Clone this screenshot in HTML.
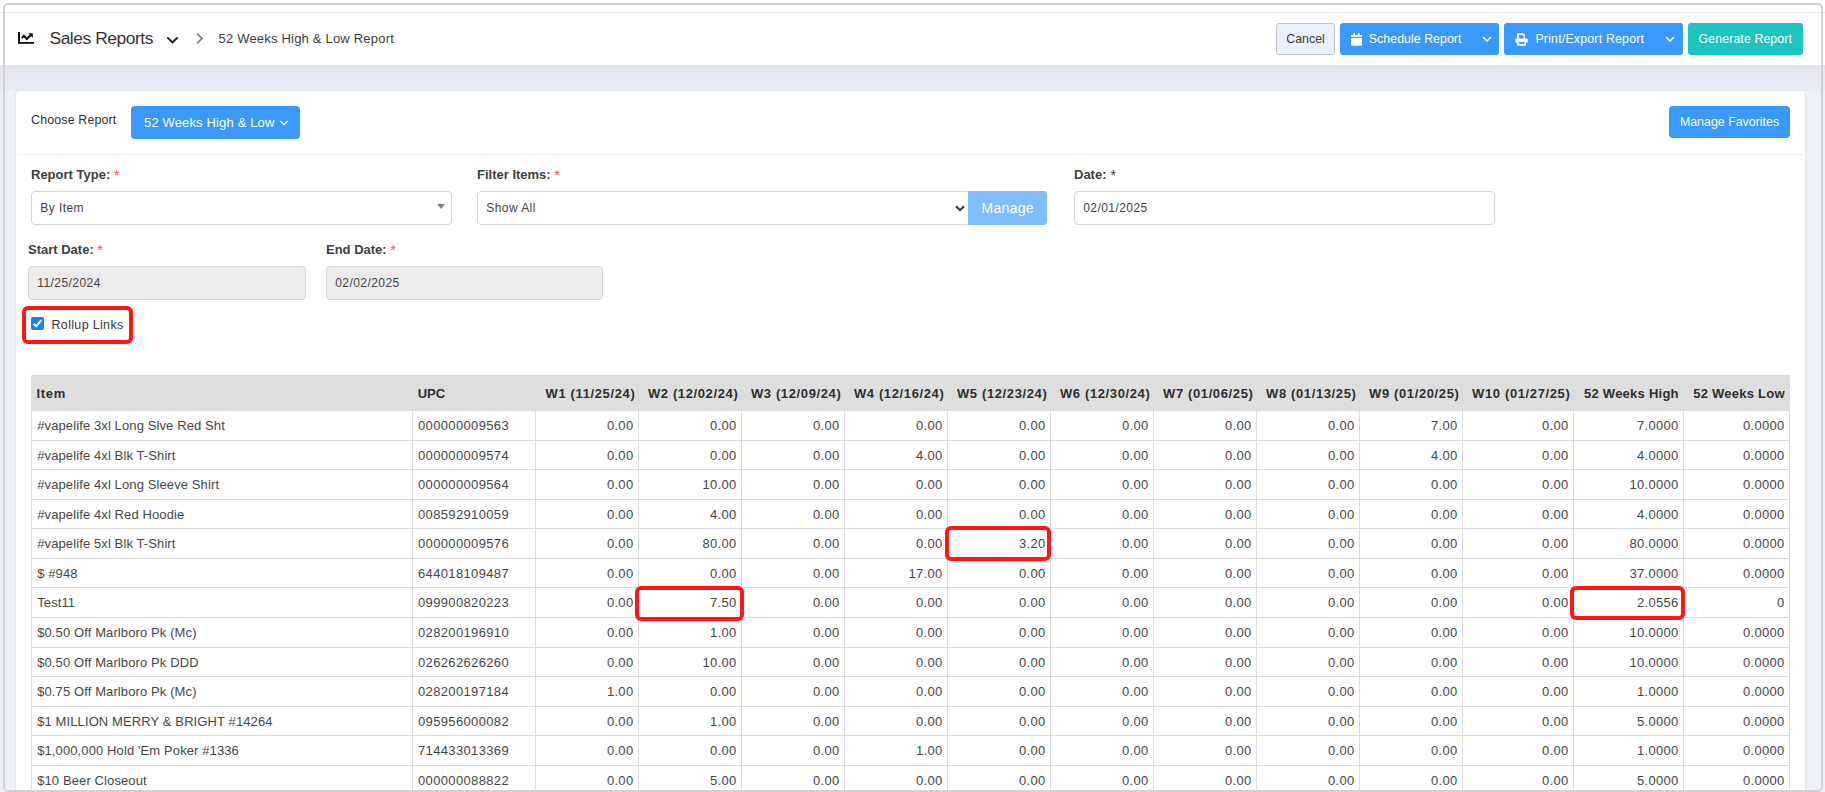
<!DOCTYPE html>
<html><head><meta charset="utf-8">
<style>
*{box-sizing:border-box;margin:0;padding:0}
html,body{width:1825px;height:792px;overflow:hidden;background:#eef0f8;font-family:"Liberation Sans",sans-serif;color:#333}
.abs{position:absolute}
#hdr{position:absolute;left:0;top:0;width:1825px;height:65px;background:#fff;border-top:1px solid #fff}
#hdrline{position:absolute;left:0;top:12px;width:1825px;height:1px;background:#e9edf1}
#frame{position:absolute;left:3px;top:3px;width:1820px;height:789px;border:2px solid #d4d1d3;border-radius:5px;pointer-events:none;z-index:50}
.btn{position:absolute;border-radius:3px;color:#fff;font-size:12.4px;line-height:31px;white-space:nowrap}
.card{position:absolute;left:15px;top:90px;width:1791px;height:720px;background:#fff;border:1px solid #e3e5ed;border-radius:4px}
.lbl{position:absolute;font-size:13px;font-weight:700;color:#404040;margin-top:1px;line-height:15px}
.req{color:#f64e60;font-size:15px;font-weight:400;line-height:0;position:relative;top:1px}
.inp{position:absolute;height:33.6px;border:1px solid #d6d6d6;border-radius:4px;background:#fff;font-size:12px;letter-spacing:.45px;color:#444;line-height:33px;padding-left:8.2px}
.dis{background:#ececec}
table{position:absolute;left:31px;top:375px;border-collapse:collapse;table-layout:fixed;font-size:13px;color:#333}
th{background:#dedede;height:35.5px;font-weight:700;text-align:right;padding:0 5px;white-space:nowrap}
td{height:29.5px;border:1px solid #dcdcdc;text-align:right;padding:0 5px;white-space:nowrap}
th.l,td.l{text-align:left}
.th{position:absolute;font-size:13px;font-weight:700;color:#2e2e2e;letter-spacing:.45px;white-space:nowrap}
.td{position:absolute;font-size:13px;color:#474747;height:29.5px;line-height:29.5px;white-space:nowrap}
.rb{position:absolute;border:4px solid #ff1616;border-radius:6px;z-index:10}
</style></head><body>
<div id="hdr"></div>
<div id="hdrline"></div>
<div class="abs" style="left:0;top:65px;width:1825px;height:26px;background:linear-gradient(#e3e4ee,#e9ebf4)"></div>

<!-- breadcrumb -->
<svg class="abs" style="left:14px;top:28px" width="24" height="20" viewBox="0 0 24 20">
 <rect x="4" y="4" width="2" height="11.8" fill="#111"/>
 <rect x="4" y="14" width="16" height="1.8" fill="#111"/>
 <path d="M7.9 10.1L9.9 7.8L12.9 10.9L16.6 7.3" fill="none" stroke="#111" stroke-width="2.1" stroke-linejoin="miter"/>
 <path d="M14.1 5.2H18.8V9.8z" fill="#111"/>
</svg>
<div class="abs" style="left:49.5px;top:28.2px;font-size:17.4px;letter-spacing:-.45px;line-height:20px;color:#333">Sales Reports</div>
<svg class="abs" style="left:160px;top:28px" width="50" height="20" viewBox="0 0 50 20">
 <path d="M7.3 9.4L12.5 14.4L17.7 9.4" fill="none" stroke="#1a1a1a" stroke-width="1.8"/>
 <path d="M37.1 5.7L41.9 10.5L37.1 15.3" fill="none" stroke="#797b8d" stroke-width="1.7"/>
</svg>
<div class="abs" style="left:218.5px;top:31px;font-size:13px;letter-spacing:.2px;color:#3d3d3d">52 Weeks High &amp; Low Report</div>

<!-- header buttons -->
<div class="btn" style="left:1276px;top:23px;width:59px;height:31.5px;background:#e9f2fc;border:1px solid #c1c4c9;color:#3f3f3f;text-align:center;line-height:31.5px">Cancel</div>
<div class="btn" style="left:1340px;top:23px;width:159px;height:32px;background:#3a99fc"></div>
<svg class="abs" style="left:1351px;top:33px" width="11" height="13" viewBox="0 0 11 13"><rect x="2.3" y="0" width="1.7" height="2.6" fill="#fff"/><rect x="6.9" y="0" width="1.8" height="2.6" fill="#fff"/><rect x="0" y="2" width="11" height="1.9" rx=".6" fill="#fff"/><path d="M0 5.1h11v6.4a1.2 1.2 0 0 1-1.2 1.2h-8.6a1.2 1.2 0 0 1-1.2-1.2z" fill="#fff"/></svg>
<div class="abs" style="left:1368.8px;top:32.3px;font-size:12.35px;letter-spacing:.05px;color:#fff;line-height:15px">Schedule Report</div>
<svg class="abs" style="left:1482px;top:36px" width="10" height="6" viewBox="0 0 10 6"><path d="M1 1L5 5L9 1" fill="none" stroke="#fff" stroke-width="1.6"/></svg>
<div class="btn" style="left:1504px;top:23px;width:179px;height:32px;background:#3a99fc"></div>
<svg class="abs" style="left:1515px;top:33px" width="13" height="13" viewBox="0 0 13 13"><path d="M2 0.2H8.3L10 1.9V6H2z" fill="#fff"/><path d="M3.8 2H7.4L8.7 3.2V5.9H3.8z" fill="#3a99fc"/><rect x="0.4" y="5.6" width="12.5" height="4.2" rx="1.2" fill="#fff"/><rect x="2" y="8.4" width="9" height="4.4" rx=".8" fill="#fff"/><rect x="3.8" y="9" width="5.7" height="1.9" fill="#3a99fc"/></svg>
<div class="abs" style="left:1535.4px;top:32.3px;font-size:12.35px;letter-spacing:.2px;color:#fff;line-height:15px">Print/Export Report</div>
<svg class="abs" style="left:1665px;top:36px" width="10" height="6" viewBox="0 0 10 6"><path d="M1 1L5 5L9 1" fill="none" stroke="#fff" stroke-width="1.6"/></svg>
<div class="btn" style="left:1688px;top:23px;width:115px;height:32px;background:#1cc5bd"></div>
<div class="abs" style="left:1698.6px;top:32.3px;font-size:12.35px;letter-spacing:.1px;color:#fff;line-height:15px">Generate Report</div>

<!-- card -->
<div class="card"></div>
<div class="abs" style="left:31px;top:113px;font-size:12.5px;letter-spacing:.1px;color:#333">Choose Report</div>
<div class="btn" style="left:131px;top:106px;width:169px;height:33px;background:#3a99fc;border-radius:4px;font-size:13px;letter-spacing:.15px;line-height:33px;padding-left:13px">52 Weeks High &amp; Low</div>
<svg class="abs" style="left:278.5px;top:120px" width="10" height="6" viewBox="0 0 10 6"><path d="M1.2 1L5 4.6L8.8 1" fill="none" stroke="#fff" stroke-width="1.4"/></svg>
<div class="btn" style="left:1669px;top:106px;width:121px;height:32px;background:#3a99fc;border-radius:4px;line-height:32px;text-align:center">Manage Favorites</div>
<div class="abs" style="left:18px;top:154px;width:1785px;height:1px;background:#ebedf3"></div>

<!-- form -->
<div class="lbl" style="left:31px;top:166px">Report Type: <span class="req">*</span></div>
<div class="inp" style="left:31px;top:191px;width:421px">By Item</div>
<svg class="abs" style="left:437px;top:204px" width="8" height="5" viewBox="0 0 8 5"><path d="M0 0H8L4 5z" fill="#808080"/></svg>
<div class="lbl" style="left:477px;top:166px">Filter Items: <span class="req">*</span></div>
<div class="inp" style="left:477px;top:191px;width:492px;border-radius:4px 0 0 4px">Show All</div>
<div class="btn" style="left:968px;top:191px;width:79px;height:33.6px;background:#80bdfc;border-radius:0 4px 4px 0;font-size:14px;letter-spacing:.3px;line-height:35px;text-align:center;text-indent:.5px">Manage</div>
<svg class="abs" style="left:955px;top:205px" width="10" height="7" viewBox="0 0 10 7"><path d="M1 1.2L5 5.2L9 1.2" fill="none" stroke="#333" stroke-width="2"/></svg>
<div class="lbl" style="left:1074px;top:166px">Date: <span class="req" style="color:#404040">*</span></div>
<div class="inp" style="left:1074px;top:191px;width:421px">02/01/2025</div>

<div class="lbl" style="left:28px;top:241px">Start Date: <span class="req">*</span></div>
<div class="inp dis" style="left:28px;top:266px;width:278px">11/25/2024</div>
<div class="lbl" style="left:326px;top:241px">End Date: <span class="req">*</span></div>
<div class="inp dis" style="left:326px;top:266px;width:277px">02/02/2025</div>

<div class="rb" style="left:21.5px;top:305.5px;width:111px;height:38px"></div>
<svg class="abs" style="left:31px;top:317px" width="13" height="13" viewBox="0 0 13 13"><rect x="0" y="0" width="13" height="13" rx="2" fill="#1a7dff"/><path d="M2.5 6.8L5.2 9.3L10.3 3.2" fill="none" stroke="#fff" stroke-width="2"/></svg>
<div class="abs" style="left:51.5px;top:318px;font-size:12.5px;letter-spacing:.33px;color:#383838;line-height:14px">Rollup Links</div>

<!-- table placeholder -->
<!-- TABLE START -->
<div class="abs" style="left:31px;top:375.0px;width:1758.5px;height:35.5px;background:#dedede"></div>
<div class="th" style="left:36.50px;letter-spacing:.7px;top:376.0px;height:35.5px;line-height:35.5px">Item</div>
<div class="th" style="left:417.70px;letter-spacing:0;top:376.0px;height:35.5px;line-height:35.5px">UPC</div>
<div class="th" style="right:1189.68px;letter-spacing:.62px;top:376.0px;height:35.5px;line-height:35.5px">W1 (11/25/24)</div>
<div class="th" style="right:1086.66px;letter-spacing:.62px;top:376.0px;height:35.5px;line-height:35.5px">W2 (12/02/24)</div>
<div class="th" style="right:983.64px;letter-spacing:.62px;top:376.0px;height:35.5px;line-height:35.5px">W3 (12/09/24)</div>
<div class="th" style="right:880.62px;letter-spacing:.62px;top:376.0px;height:35.5px;line-height:35.5px">W4 (12/16/24)</div>
<div class="th" style="right:777.60px;letter-spacing:.62px;top:376.0px;height:35.5px;line-height:35.5px">W5 (12/23/24)</div>
<div class="th" style="right:674.58px;letter-spacing:.62px;top:376.0px;height:35.5px;line-height:35.5px">W6 (12/30/24)</div>
<div class="th" style="right:571.56px;letter-spacing:.62px;top:376.0px;height:35.5px;line-height:35.5px">W7 (01/06/25)</div>
<div class="th" style="right:468.54px;letter-spacing:.62px;top:376.0px;height:35.5px;line-height:35.5px">W8 (01/13/25)</div>
<div class="th" style="right:365.52px;letter-spacing:.62px;top:376.0px;height:35.5px;line-height:35.5px">W9 (01/20/25)</div>
<div class="th" style="right:254.60px;letter-spacing:.62px;top:376.0px;height:35.5px;line-height:35.5px">W10 (01/27/25)</div>
<div class="th" style="right:146.20px;letter-spacing:.25px;top:376.0px;height:35.5px;line-height:35.5px">52 Weeks High</div>
<div class="th" style="right:40.20px;letter-spacing:.25px;top:376.0px;height:35.5px;line-height:35.5px">52 Weeks Low</div>
<div class="abs" style="left:412.40px;top:375.0px;width:1px;height:35.5px;background:#dadada"></div>
<div class="abs" style="left:535.30px;top:375.0px;width:1px;height:35.5px;background:#dadada"></div>
<div class="abs" style="left:638.32px;top:375.0px;width:1px;height:35.5px;background:#dadada"></div>
<div class="abs" style="left:741.34px;top:375.0px;width:1px;height:35.5px;background:#dadada"></div>
<div class="abs" style="left:844.36px;top:375.0px;width:1px;height:35.5px;background:#dadada"></div>
<div class="abs" style="left:947.38px;top:375.0px;width:1px;height:35.5px;background:#dadada"></div>
<div class="abs" style="left:1050.40px;top:375.0px;width:1px;height:35.5px;background:#dadada"></div>
<div class="abs" style="left:1153.42px;top:375.0px;width:1px;height:35.5px;background:#dadada"></div>
<div class="abs" style="left:1256.44px;top:375.0px;width:1px;height:35.5px;background:#dadada"></div>
<div class="abs" style="left:1359.46px;top:375.0px;width:1px;height:35.5px;background:#dadada"></div>
<div class="abs" style="left:1462.48px;top:375.0px;width:1px;height:35.5px;background:#dadada"></div>
<div class="abs" style="left:1573.40px;top:375.0px;width:1px;height:35.5px;background:#dadada"></div>
<div class="abs" style="left:1683.40px;top:375.0px;width:1px;height:35.5px;background:#dadada"></div>
<div class="abs" style="left:31.00px;top:410.5px;width:1px;height:386.53999999999996px;background:#dcdcdc"></div>
<div class="abs" style="left:411.90px;top:410.5px;width:1px;height:386.53999999999996px;background:#dcdcdc"></div>
<div class="abs" style="left:534.80px;top:410.5px;width:1px;height:386.53999999999996px;background:#dcdcdc"></div>
<div class="abs" style="left:637.82px;top:410.5px;width:1px;height:386.53999999999996px;background:#dcdcdc"></div>
<div class="abs" style="left:740.84px;top:410.5px;width:1px;height:386.53999999999996px;background:#dcdcdc"></div>
<div class="abs" style="left:843.86px;top:410.5px;width:1px;height:386.53999999999996px;background:#dcdcdc"></div>
<div class="abs" style="left:946.88px;top:410.5px;width:1px;height:386.53999999999996px;background:#dcdcdc"></div>
<div class="abs" style="left:1049.90px;top:410.5px;width:1px;height:386.53999999999996px;background:#dcdcdc"></div>
<div class="abs" style="left:1152.92px;top:410.5px;width:1px;height:386.53999999999996px;background:#dcdcdc"></div>
<div class="abs" style="left:1255.94px;top:410.5px;width:1px;height:386.53999999999996px;background:#dcdcdc"></div>
<div class="abs" style="left:1358.96px;top:410.5px;width:1px;height:386.53999999999996px;background:#dcdcdc"></div>
<div class="abs" style="left:1461.98px;top:410.5px;width:1px;height:386.53999999999996px;background:#dcdcdc"></div>
<div class="abs" style="left:1572.90px;top:410.5px;width:1px;height:386.53999999999996px;background:#dcdcdc"></div>
<div class="abs" style="left:1682.90px;top:410.5px;width:1px;height:386.53999999999996px;background:#dcdcdc"></div>
<div class="abs" style="left:1788.90px;top:410.5px;width:1px;height:386.53999999999996px;background:#dcdcdc"></div>
<div class="abs" style="left:31px;top:439.58px;width:1758.9px;height:1px;background:#dcdcdc"></div>
<div class="abs" style="left:31px;top:469.16px;width:1758.9px;height:1px;background:#dcdcdc"></div>
<div class="abs" style="left:31px;top:498.74px;width:1758.9px;height:1px;background:#dcdcdc"></div>
<div class="abs" style="left:31px;top:528.32px;width:1758.9px;height:1px;background:#dcdcdc"></div>
<div class="abs" style="left:31px;top:557.90px;width:1758.9px;height:1px;background:#dcdcdc"></div>
<div class="abs" style="left:31px;top:587.48px;width:1758.9px;height:1px;background:#dcdcdc"></div>
<div class="abs" style="left:31px;top:617.06px;width:1758.9px;height:1px;background:#dcdcdc"></div>
<div class="abs" style="left:31px;top:646.64px;width:1758.9px;height:1px;background:#dcdcdc"></div>
<div class="abs" style="left:31px;top:676.22px;width:1758.9px;height:1px;background:#dcdcdc"></div>
<div class="abs" style="left:31px;top:705.80px;width:1758.9px;height:1px;background:#dcdcdc"></div>
<div class="abs" style="left:31px;top:735.38px;width:1758.9px;height:1px;background:#dcdcdc"></div>
<div class="abs" style="left:31px;top:764.96px;width:1758.9px;height:1px;background:#dcdcdc"></div>
<div class="abs" style="left:31px;top:794.54px;width:1758.9px;height:1px;background:#dcdcdc"></div>
<div class="td" style="left:37.20px;letter-spacing:.11px;top:411.00px">#vapelife 3xl Long Slve Red Sht</div>
<div class="td" style="left:418.00px;letter-spacing:.35px;top:411.00px">000000009563</div>
<div class="td" style="right:1191.58px;letter-spacing:.3px;top:411.00px">0.00</div>
<div class="td" style="right:1088.56px;letter-spacing:.3px;top:411.00px">0.00</div>
<div class="td" style="right:985.54px;letter-spacing:.3px;top:411.00px">0.00</div>
<div class="td" style="right:882.52px;letter-spacing:.3px;top:411.00px">0.00</div>
<div class="td" style="right:779.50px;letter-spacing:.3px;top:411.00px">0.00</div>
<div class="td" style="right:676.48px;letter-spacing:.3px;top:411.00px">0.00</div>
<div class="td" style="right:573.46px;letter-spacing:.3px;top:411.00px">0.00</div>
<div class="td" style="right:470.44px;letter-spacing:.3px;top:411.00px">0.00</div>
<div class="td" style="right:367.42px;letter-spacing:.3px;top:411.00px">7.00</div>
<div class="td" style="right:256.50px;letter-spacing:.3px;top:411.00px">0.00</div>
<div class="td" style="right:146.50px;letter-spacing:.3px;top:411.00px">7.0000</div>
<div class="td" style="right:40.50px;letter-spacing:.3px;top:411.00px">0.0000</div>
<div class="td" style="left:37.20px;letter-spacing:.11px;top:440.58px">#vapelife 4xl Blk T-Shirt</div>
<div class="td" style="left:418.00px;letter-spacing:.35px;top:440.58px">000000009574</div>
<div class="td" style="right:1191.58px;letter-spacing:.3px;top:440.58px">0.00</div>
<div class="td" style="right:1088.56px;letter-spacing:.3px;top:440.58px">0.00</div>
<div class="td" style="right:985.54px;letter-spacing:.3px;top:440.58px">0.00</div>
<div class="td" style="right:882.52px;letter-spacing:.3px;top:440.58px">4.00</div>
<div class="td" style="right:779.50px;letter-spacing:.3px;top:440.58px">0.00</div>
<div class="td" style="right:676.48px;letter-spacing:.3px;top:440.58px">0.00</div>
<div class="td" style="right:573.46px;letter-spacing:.3px;top:440.58px">0.00</div>
<div class="td" style="right:470.44px;letter-spacing:.3px;top:440.58px">0.00</div>
<div class="td" style="right:367.42px;letter-spacing:.3px;top:440.58px">4.00</div>
<div class="td" style="right:256.50px;letter-spacing:.3px;top:440.58px">0.00</div>
<div class="td" style="right:146.50px;letter-spacing:.3px;top:440.58px">4.0000</div>
<div class="td" style="right:40.50px;letter-spacing:.3px;top:440.58px">0.0000</div>
<div class="td" style="left:37.20px;letter-spacing:.11px;top:470.16px">#vapelife 4xl Long Sleeve Shirt</div>
<div class="td" style="left:418.00px;letter-spacing:.35px;top:470.16px">000000009564</div>
<div class="td" style="right:1191.58px;letter-spacing:.3px;top:470.16px">0.00</div>
<div class="td" style="right:1088.56px;letter-spacing:.3px;top:470.16px">10.00</div>
<div class="td" style="right:985.54px;letter-spacing:.3px;top:470.16px">0.00</div>
<div class="td" style="right:882.52px;letter-spacing:.3px;top:470.16px">0.00</div>
<div class="td" style="right:779.50px;letter-spacing:.3px;top:470.16px">0.00</div>
<div class="td" style="right:676.48px;letter-spacing:.3px;top:470.16px">0.00</div>
<div class="td" style="right:573.46px;letter-spacing:.3px;top:470.16px">0.00</div>
<div class="td" style="right:470.44px;letter-spacing:.3px;top:470.16px">0.00</div>
<div class="td" style="right:367.42px;letter-spacing:.3px;top:470.16px">0.00</div>
<div class="td" style="right:256.50px;letter-spacing:.3px;top:470.16px">0.00</div>
<div class="td" style="right:146.50px;letter-spacing:.3px;top:470.16px">10.0000</div>
<div class="td" style="right:40.50px;letter-spacing:.3px;top:470.16px">0.0000</div>
<div class="td" style="left:37.20px;letter-spacing:.11px;top:499.74px">#vapelife 4xl Red Hoodie</div>
<div class="td" style="left:418.00px;letter-spacing:.35px;top:499.74px">008592910059</div>
<div class="td" style="right:1191.58px;letter-spacing:.3px;top:499.74px">0.00</div>
<div class="td" style="right:1088.56px;letter-spacing:.3px;top:499.74px">4.00</div>
<div class="td" style="right:985.54px;letter-spacing:.3px;top:499.74px">0.00</div>
<div class="td" style="right:882.52px;letter-spacing:.3px;top:499.74px">0.00</div>
<div class="td" style="right:779.50px;letter-spacing:.3px;top:499.74px">0.00</div>
<div class="td" style="right:676.48px;letter-spacing:.3px;top:499.74px">0.00</div>
<div class="td" style="right:573.46px;letter-spacing:.3px;top:499.74px">0.00</div>
<div class="td" style="right:470.44px;letter-spacing:.3px;top:499.74px">0.00</div>
<div class="td" style="right:367.42px;letter-spacing:.3px;top:499.74px">0.00</div>
<div class="td" style="right:256.50px;letter-spacing:.3px;top:499.74px">0.00</div>
<div class="td" style="right:146.50px;letter-spacing:.3px;top:499.74px">4.0000</div>
<div class="td" style="right:40.50px;letter-spacing:.3px;top:499.74px">0.0000</div>
<div class="td" style="left:37.20px;letter-spacing:.11px;top:529.32px">#vapelife 5xl Blk T-Shirt</div>
<div class="td" style="left:418.00px;letter-spacing:.35px;top:529.32px">000000009576</div>
<div class="td" style="right:1191.58px;letter-spacing:.3px;top:529.32px">0.00</div>
<div class="td" style="right:1088.56px;letter-spacing:.3px;top:529.32px">80.00</div>
<div class="td" style="right:985.54px;letter-spacing:.3px;top:529.32px">0.00</div>
<div class="td" style="right:882.52px;letter-spacing:.3px;top:529.32px">0.00</div>
<div class="td" style="right:779.50px;letter-spacing:.3px;top:529.32px">3.20</div>
<div class="td" style="right:676.48px;letter-spacing:.3px;top:529.32px">0.00</div>
<div class="td" style="right:573.46px;letter-spacing:.3px;top:529.32px">0.00</div>
<div class="td" style="right:470.44px;letter-spacing:.3px;top:529.32px">0.00</div>
<div class="td" style="right:367.42px;letter-spacing:.3px;top:529.32px">0.00</div>
<div class="td" style="right:256.50px;letter-spacing:.3px;top:529.32px">0.00</div>
<div class="td" style="right:146.50px;letter-spacing:.3px;top:529.32px">80.0000</div>
<div class="td" style="right:40.50px;letter-spacing:.3px;top:529.32px">0.0000</div>
<div class="td" style="left:37.20px;letter-spacing:.11px;top:558.90px">$ #948</div>
<div class="td" style="left:418.00px;letter-spacing:.35px;top:558.90px">644018109487</div>
<div class="td" style="right:1191.58px;letter-spacing:.3px;top:558.90px">0.00</div>
<div class="td" style="right:1088.56px;letter-spacing:.3px;top:558.90px">0.00</div>
<div class="td" style="right:985.54px;letter-spacing:.3px;top:558.90px">0.00</div>
<div class="td" style="right:882.52px;letter-spacing:.3px;top:558.90px">17.00</div>
<div class="td" style="right:779.50px;letter-spacing:.3px;top:558.90px">0.00</div>
<div class="td" style="right:676.48px;letter-spacing:.3px;top:558.90px">0.00</div>
<div class="td" style="right:573.46px;letter-spacing:.3px;top:558.90px">0.00</div>
<div class="td" style="right:470.44px;letter-spacing:.3px;top:558.90px">0.00</div>
<div class="td" style="right:367.42px;letter-spacing:.3px;top:558.90px">0.00</div>
<div class="td" style="right:256.50px;letter-spacing:.3px;top:558.90px">0.00</div>
<div class="td" style="right:146.50px;letter-spacing:.3px;top:558.90px">37.0000</div>
<div class="td" style="right:40.50px;letter-spacing:.3px;top:558.90px">0.0000</div>
<div class="td" style="left:37.20px;letter-spacing:.11px;top:588.48px">Test11</div>
<div class="td" style="left:418.00px;letter-spacing:.35px;top:588.48px">099900820223</div>
<div class="td" style="right:1191.58px;letter-spacing:.3px;top:588.48px">0.00</div>
<div class="td" style="right:1088.56px;letter-spacing:.3px;top:588.48px">7.50</div>
<div class="td" style="right:985.54px;letter-spacing:.3px;top:588.48px">0.00</div>
<div class="td" style="right:882.52px;letter-spacing:.3px;top:588.48px">0.00</div>
<div class="td" style="right:779.50px;letter-spacing:.3px;top:588.48px">0.00</div>
<div class="td" style="right:676.48px;letter-spacing:.3px;top:588.48px">0.00</div>
<div class="td" style="right:573.46px;letter-spacing:.3px;top:588.48px">0.00</div>
<div class="td" style="right:470.44px;letter-spacing:.3px;top:588.48px">0.00</div>
<div class="td" style="right:367.42px;letter-spacing:.3px;top:588.48px">0.00</div>
<div class="td" style="right:256.50px;letter-spacing:.3px;top:588.48px">0.00</div>
<div class="td" style="right:146.50px;letter-spacing:.3px;top:588.48px">2.0556</div>
<div class="td" style="right:40.50px;letter-spacing:.3px;top:588.48px">0</div>
<div class="td" style="left:37.20px;letter-spacing:.11px;top:618.06px">$0.50 Off Marlboro Pk (Mc)</div>
<div class="td" style="left:418.00px;letter-spacing:.35px;top:618.06px">028200196910</div>
<div class="td" style="right:1191.58px;letter-spacing:.3px;top:618.06px">0.00</div>
<div class="td" style="right:1088.56px;letter-spacing:.3px;top:618.06px">1.00</div>
<div class="td" style="right:985.54px;letter-spacing:.3px;top:618.06px">0.00</div>
<div class="td" style="right:882.52px;letter-spacing:.3px;top:618.06px">0.00</div>
<div class="td" style="right:779.50px;letter-spacing:.3px;top:618.06px">0.00</div>
<div class="td" style="right:676.48px;letter-spacing:.3px;top:618.06px">0.00</div>
<div class="td" style="right:573.46px;letter-spacing:.3px;top:618.06px">0.00</div>
<div class="td" style="right:470.44px;letter-spacing:.3px;top:618.06px">0.00</div>
<div class="td" style="right:367.42px;letter-spacing:.3px;top:618.06px">0.00</div>
<div class="td" style="right:256.50px;letter-spacing:.3px;top:618.06px">0.00</div>
<div class="td" style="right:146.50px;letter-spacing:.3px;top:618.06px">10.0000</div>
<div class="td" style="right:40.50px;letter-spacing:.3px;top:618.06px">0.0000</div>
<div class="td" style="left:37.20px;letter-spacing:.11px;top:647.64px">$0.50 Off Marlboro Pk DDD</div>
<div class="td" style="left:418.00px;letter-spacing:.35px;top:647.64px">026262626260</div>
<div class="td" style="right:1191.58px;letter-spacing:.3px;top:647.64px">0.00</div>
<div class="td" style="right:1088.56px;letter-spacing:.3px;top:647.64px">10.00</div>
<div class="td" style="right:985.54px;letter-spacing:.3px;top:647.64px">0.00</div>
<div class="td" style="right:882.52px;letter-spacing:.3px;top:647.64px">0.00</div>
<div class="td" style="right:779.50px;letter-spacing:.3px;top:647.64px">0.00</div>
<div class="td" style="right:676.48px;letter-spacing:.3px;top:647.64px">0.00</div>
<div class="td" style="right:573.46px;letter-spacing:.3px;top:647.64px">0.00</div>
<div class="td" style="right:470.44px;letter-spacing:.3px;top:647.64px">0.00</div>
<div class="td" style="right:367.42px;letter-spacing:.3px;top:647.64px">0.00</div>
<div class="td" style="right:256.50px;letter-spacing:.3px;top:647.64px">0.00</div>
<div class="td" style="right:146.50px;letter-spacing:.3px;top:647.64px">10.0000</div>
<div class="td" style="right:40.50px;letter-spacing:.3px;top:647.64px">0.0000</div>
<div class="td" style="left:37.20px;letter-spacing:.11px;top:677.22px">$0.75 Off Marlboro Pk (Mc)</div>
<div class="td" style="left:418.00px;letter-spacing:.35px;top:677.22px">028200197184</div>
<div class="td" style="right:1191.58px;letter-spacing:.3px;top:677.22px">1.00</div>
<div class="td" style="right:1088.56px;letter-spacing:.3px;top:677.22px">0.00</div>
<div class="td" style="right:985.54px;letter-spacing:.3px;top:677.22px">0.00</div>
<div class="td" style="right:882.52px;letter-spacing:.3px;top:677.22px">0.00</div>
<div class="td" style="right:779.50px;letter-spacing:.3px;top:677.22px">0.00</div>
<div class="td" style="right:676.48px;letter-spacing:.3px;top:677.22px">0.00</div>
<div class="td" style="right:573.46px;letter-spacing:.3px;top:677.22px">0.00</div>
<div class="td" style="right:470.44px;letter-spacing:.3px;top:677.22px">0.00</div>
<div class="td" style="right:367.42px;letter-spacing:.3px;top:677.22px">0.00</div>
<div class="td" style="right:256.50px;letter-spacing:.3px;top:677.22px">0.00</div>
<div class="td" style="right:146.50px;letter-spacing:.3px;top:677.22px">1.0000</div>
<div class="td" style="right:40.50px;letter-spacing:.3px;top:677.22px">0.0000</div>
<div class="td" style="left:37.20px;letter-spacing:.11px;top:706.80px">$1 MILLION MERRY &amp; BRIGHT #14264</div>
<div class="td" style="left:418.00px;letter-spacing:.35px;top:706.80px">095956000082</div>
<div class="td" style="right:1191.58px;letter-spacing:.3px;top:706.80px">0.00</div>
<div class="td" style="right:1088.56px;letter-spacing:.3px;top:706.80px">1.00</div>
<div class="td" style="right:985.54px;letter-spacing:.3px;top:706.80px">0.00</div>
<div class="td" style="right:882.52px;letter-spacing:.3px;top:706.80px">0.00</div>
<div class="td" style="right:779.50px;letter-spacing:.3px;top:706.80px">0.00</div>
<div class="td" style="right:676.48px;letter-spacing:.3px;top:706.80px">0.00</div>
<div class="td" style="right:573.46px;letter-spacing:.3px;top:706.80px">0.00</div>
<div class="td" style="right:470.44px;letter-spacing:.3px;top:706.80px">0.00</div>
<div class="td" style="right:367.42px;letter-spacing:.3px;top:706.80px">0.00</div>
<div class="td" style="right:256.50px;letter-spacing:.3px;top:706.80px">0.00</div>
<div class="td" style="right:146.50px;letter-spacing:.3px;top:706.80px">5.0000</div>
<div class="td" style="right:40.50px;letter-spacing:.3px;top:706.80px">0.0000</div>
<div class="td" style="left:37.20px;letter-spacing:.11px;top:736.38px">$1,000,000 Hold 'Em Poker #1336</div>
<div class="td" style="left:418.00px;letter-spacing:.35px;top:736.38px">714433013369</div>
<div class="td" style="right:1191.58px;letter-spacing:.3px;top:736.38px">0.00</div>
<div class="td" style="right:1088.56px;letter-spacing:.3px;top:736.38px">0.00</div>
<div class="td" style="right:985.54px;letter-spacing:.3px;top:736.38px">0.00</div>
<div class="td" style="right:882.52px;letter-spacing:.3px;top:736.38px">1.00</div>
<div class="td" style="right:779.50px;letter-spacing:.3px;top:736.38px">0.00</div>
<div class="td" style="right:676.48px;letter-spacing:.3px;top:736.38px">0.00</div>
<div class="td" style="right:573.46px;letter-spacing:.3px;top:736.38px">0.00</div>
<div class="td" style="right:470.44px;letter-spacing:.3px;top:736.38px">0.00</div>
<div class="td" style="right:367.42px;letter-spacing:.3px;top:736.38px">0.00</div>
<div class="td" style="right:256.50px;letter-spacing:.3px;top:736.38px">0.00</div>
<div class="td" style="right:146.50px;letter-spacing:.3px;top:736.38px">1.0000</div>
<div class="td" style="right:40.50px;letter-spacing:.3px;top:736.38px">0.0000</div>
<div class="td" style="left:37.20px;letter-spacing:.11px;top:765.96px">$10 Beer Closeout</div>
<div class="td" style="left:418.00px;letter-spacing:.35px;top:765.96px">000000088822</div>
<div class="td" style="right:1191.58px;letter-spacing:.3px;top:765.96px">0.00</div>
<div class="td" style="right:1088.56px;letter-spacing:.3px;top:765.96px">5.00</div>
<div class="td" style="right:985.54px;letter-spacing:.3px;top:765.96px">0.00</div>
<div class="td" style="right:882.52px;letter-spacing:.3px;top:765.96px">0.00</div>
<div class="td" style="right:779.50px;letter-spacing:.3px;top:765.96px">0.00</div>
<div class="td" style="right:676.48px;letter-spacing:.3px;top:765.96px">0.00</div>
<div class="td" style="right:573.46px;letter-spacing:.3px;top:765.96px">0.00</div>
<div class="td" style="right:470.44px;letter-spacing:.3px;top:765.96px">0.00</div>
<div class="td" style="right:367.42px;letter-spacing:.3px;top:765.96px">0.00</div>
<div class="td" style="right:256.50px;letter-spacing:.3px;top:765.96px">0.00</div>
<div class="td" style="right:146.50px;letter-spacing:.3px;top:765.96px">5.0000</div>
<div class="td" style="right:40.50px;letter-spacing:.3px;top:765.96px">0.0000</div>
<!-- TABLE END -->

<div class="rb" style="left:944.5px;top:525.5px;width:106px;height:35px"></div>
<div class="rb" style="left:634.5px;top:585.5px;width:109.5px;height:35px"></div>
<div class="rb" style="left:1569.5px;top:585.5px;width:115px;height:34px"></div>
<div id="frame"></div>
</body></html>
